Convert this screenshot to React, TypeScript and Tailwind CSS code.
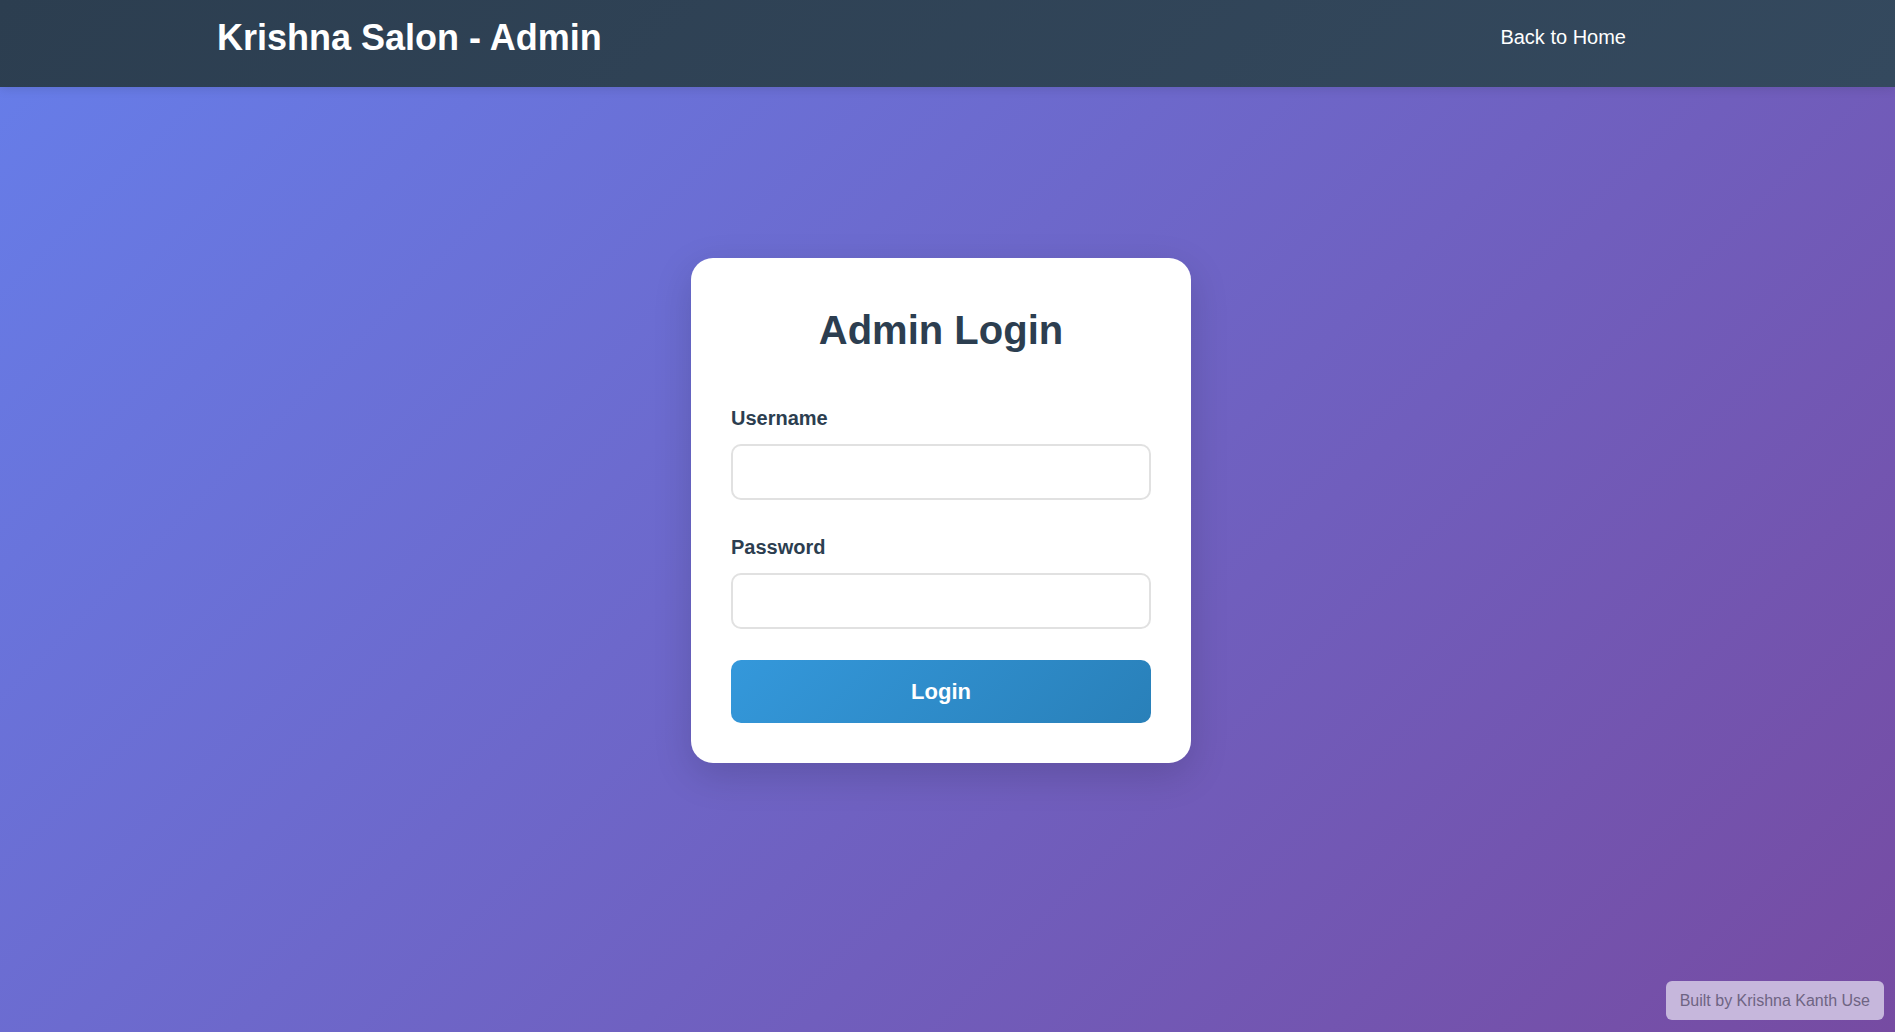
import { useState } from 'react';

export default function App() {
  const [username, setUsername] = useState('');
  const [password, setPassword] = useState('');

  return (
    <div
      className="min-h-screen bg-[linear-gradient(135deg,#667eea_0%,#764ba2_100%)] text-[#2c3e50]"
      style={{ fontFamily: '"Liberation Sans", Arial, sans-serif' }}
    >
      {/* Header */}
      <header className="h-[87px] bg-[linear-gradient(135deg,#2c3e50_0%,#34495e_100%)] shadow-[0_2px_10px_rgba(0,0,0,0.1)]">
        <div className="h-[75px] flex items-center justify-between pl-[217px] pr-[269px]">
          <h1 className="text-[36px] leading-[41px] font-bold text-white">Krishna Salon - Admin</h1>
          <a href="#" className="text-[20px] leading-[23px] text-white">Back to Home</a>
        </div>
      </header>

      {/* Login card */}
      <main className="flex justify-center pt-[171px] pr-[13px]">
        <div className="w-[500px] bg-white rounded-[22px] p-[40px] shadow-[0_12px_38px_rgba(0,0,0,0.15)]">
          <h2 className="text-[40px] leading-[64px] font-bold text-center text-[#2c3e50] mb-[40px]">Admin Login</h2>

          <form onSubmit={e => e.preventDefault()}>
            <div className="mb-[31px]">
              <label className="block text-[20px] leading-[32px] font-bold text-[#2c3e50] mb-[10px]">Username</label>
              <input
                value={username}
                onChange={e => setUsername(e.target.value)}
                className="block w-full h-[56px] px-[15px] border-2 border-[#e1e1e1] rounded-[10px] bg-white text-[20px] outline-none"
              />
            </div>

            <div className="mb-[31px]">
              <label className="block text-[20px] leading-[32px] font-bold text-[#2c3e50] mb-[10px]">Password</label>
              <input
                type="password"
                value={password}
                onChange={e => setPassword(e.target.value)}
                className="block w-full h-[56px] px-[15px] border-2 border-[#e1e1e1] rounded-[10px] bg-white text-[20px] outline-none"
              />
            </div>

            <button
              type="submit"
              className="w-full h-[63px] rounded-[10px] bg-[linear-gradient(135deg,#3498db_0%,#2980b9_100%)] text-white text-[22px] font-bold"
            >
              Login
            </button>
          </form>
        </div>
      </main>

      {/* Footer badge */}
      <div className="fixed bottom-[12px] right-[11px] h-[39px] px-[14px] flex items-center rounded-[6px] bg-[#c6b7dc] text-[#6e6483] text-[16px] whitespace-nowrap">
        Built by Krishna Kanth Use
      </div>
    </div>
  );
}
